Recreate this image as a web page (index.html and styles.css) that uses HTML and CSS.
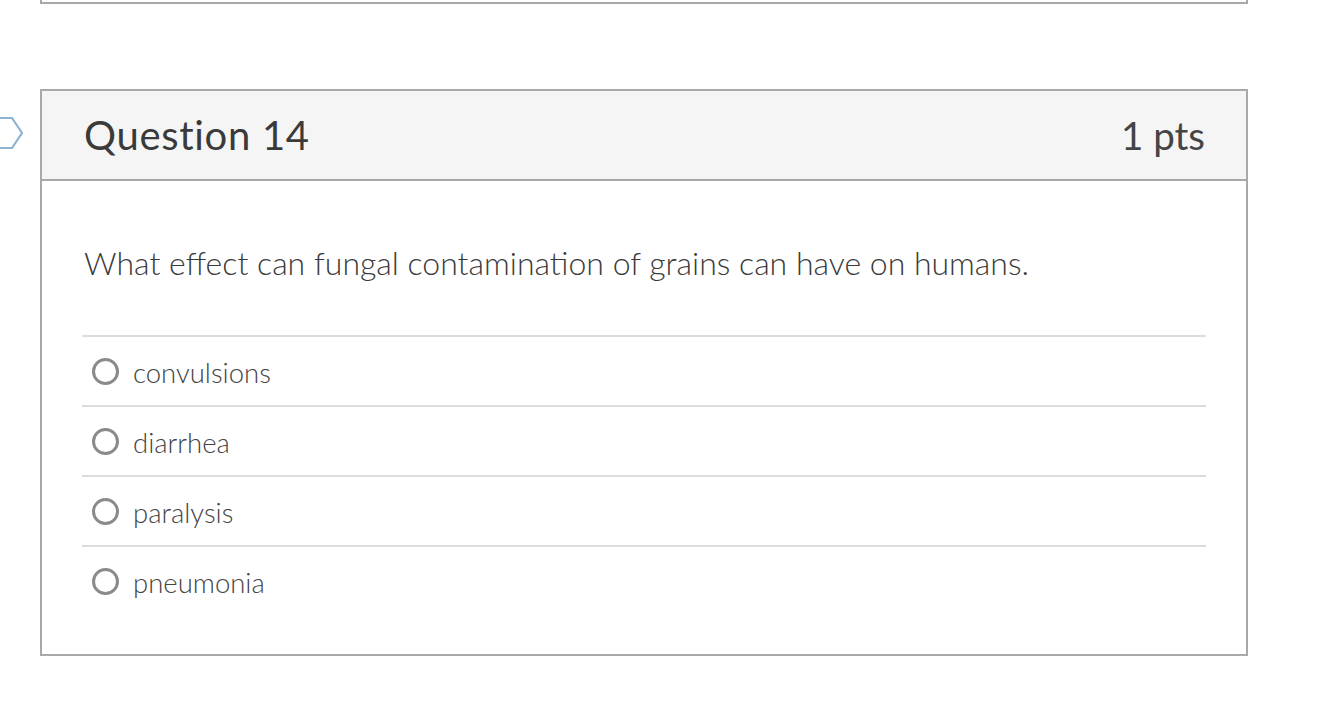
FILE: index.html
```html
<!DOCTYPE html>
<html>
<head>
<meta charset="utf-8">
<link rel="stylesheet" href="styles.css">
</head>
<body>
<div class="page">
  <div class="prev-question"></div>
  <div class="question-wrap">
    <svg class="flag" width="24" height="34" viewBox="0 0 24 34">
      <path d="M-2 2 H12 L22 17 L12 32 H-2" fill="none" stroke="#8db2d2" stroke-width="2.2" stroke-linejoin="miter"/>
    </svg>
    <div class="question">
      <div class="q-header">
        <span class="q-title">Question 14</span>
        <span class="q-points">1 pts</span>
      </div>
      <div class="q-body">
        <p class="q-text">What effect can fungal contamination of grains can have on humans.</p>
        <ul class="answers">
          <li class="answer"><span class="radio"></span><span class="label">convulsions</span></li>
          <li class="answer"><span class="radio"></span><span class="label">diarrhea</span></li>
          <li class="answer"><span class="radio"></span><span class="label">paralysis</span></li>
          <li class="answer"><span class="radio"></span><span class="label">pneumonia</span></li>
        </ul>
      </div>
    </div>
  </div>
</div>
</body>
</html>
```

FILE: styles.css
```css
html, body {
  margin: 0;
  padding: 0;
  background: #fff;
}
body {
  font-family: Lato, "Open Sans", sans-serif;
  color: #333;
}
.page {
  padding-left: 40px;
  width: 1208px;
}
.prev-question {
  height: 2px;
  border: 2px solid #a9a9a9;
  border-top: none;
}
.question-wrap {
  position: relative;
  margin-top: 85px;
}
.flag {
  position: absolute;
  left: -40px;
  top: 27px;
}
.question {
  border: 2px solid #a9a9a9;
}
.q-header {
  display: flex;
  align-items: center;
  justify-content: space-between;
  height: 88px;
  padding: 0 41px 0 42px;
  background: #f5f5f5;
  border-bottom: 2px solid #a9a9a9;
}
.q-title {
  font-size: 40px;
  font-weight: 400;
  letter-spacing: 0.7px;
  color: #3a3a3a;
}
.q-points {
  font-size: 38.5px;
  font-weight: 400;
  color: #444;
}
.q-body {
  padding: 48px 40px 39px 40px;
}
.q-text {
  margin: 0 0 0 2px;
  font-size: 32px;
  font-weight: 300;
  line-height: 68px;
  color: #3a3a3a;
  padding-bottom: 38px;
}
.answers {
  list-style: none;
  margin: 0;
  padding: 0;
}
.answer {
  display: flex;
  align-items: center;
  height: 68px;
  border-top: 2px solid #dcdcdc;
}
.radio {
  width: 21px;
  height: 21px;
  border: 3px solid #8a8a8a;
  border-radius: 50%;
  margin-left: 10px;
  margin-right: 14px;
  flex: none;
}
.label {
  font-size: 27.5px;
  font-weight: 300;
  color: #444;
  position: relative;
  top: 1px;
}
```
